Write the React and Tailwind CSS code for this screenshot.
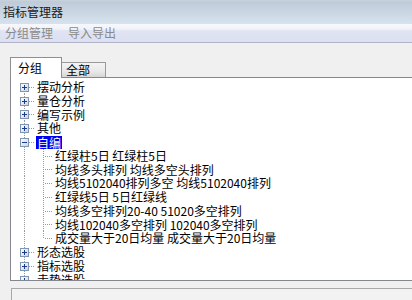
import React from "react";

const rows = [
  { t: "摆动分析", lvl: 0, sign: "+", h: "h-[14px]", hv: 14, first: true },
  { t: "量仓分析", lvl: 0, sign: "+", h: "h-[14px]", hv: 14 },
  { t: "编写示例", lvl: 0, sign: "+", h: "h-[13px]", hv: 13 },
  { t: "其他", lvl: 0, sign: "+", h: "h-[14px]", hv: 14 },
  { t: "自编", lvl: 0, sign: "-", h: "h-[14px]", hv: 14, selected: true },
  { t: "红绿柱5日 红绿柱5日", lvl: 1, h: "h-[14px]", hv: 14 },
  { t: "均线多头排列 均线多空头排列", lvl: 1, h: "h-[13px]", hv: 13 },
  { t: "均线5102040排列多空 均线5102040排列", lvl: 1, h: "h-[14px]", hv: 14 },
  { t: "红绿线5日 5日红绿线", lvl: 1, h: "h-[14px]", hv: 14 },
  { t: "均线多空排列20-40 51020多空排列", lvl: 1, h: "h-[14px]", hv: 14 },
  { t: "均线102040多空排列 102040多空排列", lvl: 1, h: "h-[13px]", hv: 13 },
  { t: "成交量大于20日均量 成交量大于20日均量", lvl: 1, h: "h-[14px]", hv: 14, last: true },
  { t: "形态选股", lvl: 0, sign: "+", h: "h-[14px]", hv: 14 },
  { t: "指标选股", lvl: 0, sign: "+", h: "h-[14px]", hv: 14 },
  { t: "走势选股", lvl: 0, sign: "+", h: "h-[14px]", hv: 14 },
];

const DOT = "#9a9a9a";

function VDots({ x, y1, y2 }) {
  const out = [];
  for (let y = y1; y < y2; y += 2) out.push(<rect key={y} x={x} y={y} width="1" height="1" fill={DOT} />);
  return out;
}
function HDots({ x1, x2, y }) {
  const out = [];
  for (let x = x1; x < x2; x += 2) out.push(<rect key={x} x={x} y={y} width="1" height="1" fill={DOT} />);
  return out;
}

function ExpandBox({ cx, cy, sign }) {
  return (
    <g>
      <defs>
        <linearGradient id="bx" x1="0" y1="0" x2="1" y2="1">
          <stop offset="0" stopColor="#ffffff" />
          <stop offset="1" stopColor="#c8d4e2" />
        </linearGradient>
      </defs>
      <rect x={cx - 4 + 0.5} y={cy - 4 + 0.5} width="8" height="8" fill="url(#bx)" stroke="#7f97b2" strokeWidth="1" />
      <rect x={cx - 2} y={cy} width="5" height="1" fill="#1c3a8e" />
      {sign === "+" && <rect x={cx} y={cy - 2} width="1" height="5" fill="#1c3a8e" />}
    </g>
  );
}

function Gutter({ r }) {
  const h = r.hv;
  const cy = Math.floor(h / 2);
  if (r.lvl === 0) {
    return (
      <svg width="24" height={h} className="shrink-0 block">
        <VDots x={13} y1={r.first ? cy : 0} y2={h} />
        <HDots x1={18} x2={23} y={cy} />
        <ExpandBox cx={13} cy={cy} sign={r.sign} />
      </svg>
    );
  }
  return (
    <svg width="42" height={h} className="shrink-0 block">
      <VDots x={13} y1={0} y2={h} />
      <VDots x={32} y1={0} y2={r.last ? cy + 1 : h} />
      <HDots x1={34} x2={41} y={cy} />
    </svg>
  );
}

export default function App() {
  return (
    <div className="w-[412px] h-[300px] overflow-hidden bg-[#f0f0f0] font-['Noto_Sans_CJK_SC',sans-serif] text-[12px] leading-[14px] text-black">
      {/* title bar */}
      <div className="h-[24px] flex items-center pl-[3px] bg-[linear-gradient(to_bottom,#c9d3dd_0px,#bfcbd8_2px,#d6e2ee_100%)] text-[#1a1a1a]">
        指标管理器
      </div>
      {/* menu bar */}
      <div className="h-[19px] flex items-center pl-[5px] gap-[15px] border-b border-[#b3b6c8] bg-[linear-gradient(to_bottom,#f7f8fb_0px,#f2f3f9_5px,#dfe3f3_7px,#dce0f2_100%)] text-[#8a8a8a]">
        <span>分组管理</span>
        <span>导入导出</span>
      </div>
      {/* tabs */}
      <div className="flex items-end ml-[10px] mt-[14px]">
        <div className="relative z-10 w-[52px] h-[21px] -mb-[1px] bg-white border border-b-0 border-[#8f8f8f] pl-[7px] pt-[3px]">
          分组
        </div>
        <div className="w-[44px] h-[15px] border border-l-0 border-b-0 border-[#9a9a9a] bg-[linear-gradient(to_bottom,#f4f4f4,#e8e8e8_60%,#d6d6d6)] pl-[4px] leading-[14px]">
          全部
        </div>
      </div>
      {/* tree box */}
      <div className="ml-[10px] w-[420px] h-[204px] overflow-hidden border border-[#828790] bg-white pt-[2px]">
        {rows.map((r, i) => (
          <div key={i} className={`flex items-center ${r.h}`}>
            <Gutter r={r} />
            <span
              className={
                r.selected
                  ? "ml-[1px] px-[1px] h-[13px] leading-[13px] bg-[#0000f0] text-white whitespace-pre"
                  : "ml-[1px] px-[1px] whitespace-pre"
              }
            >
              {r.t}
            </span>
          </div>
        ))}
      </div>
      {/* lower panel */}
      <div className="ml-[11px] mt-[7px] h-[20px] border-t border-l border-[#a9a9a9] bg-[#f2f2f2]" />
    </div>
  );
}
